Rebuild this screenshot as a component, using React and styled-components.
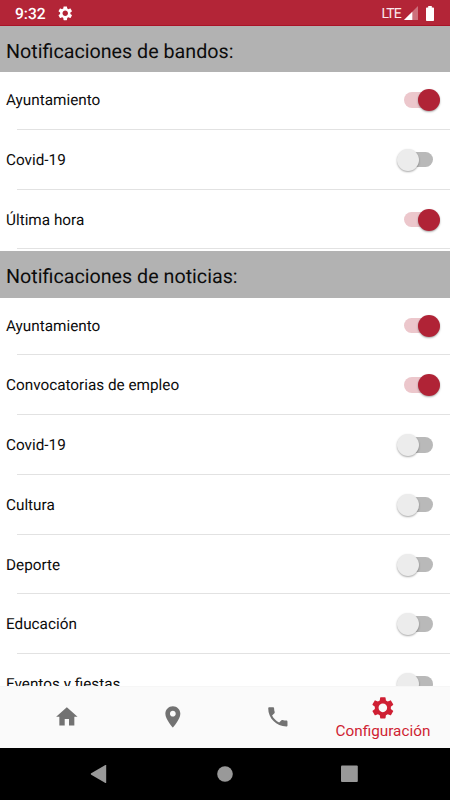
import React, { useState } from 'react'
import styled, { createGlobalStyle } from 'styled-components'

const bandos = [
    { label: 'Ayuntamiento', on: true },
    { label: 'Covid-19', on: false },
    { label: 'Última hora', on: true },
]

const noticias = [
    { label: 'Ayuntamiento', on: true },
    { label: 'Convocatorias de empleo', on: true },
    { label: 'Covid-19', on: false },
    { label: 'Cultura', on: false },
    { label: 'Deporte', on: false },
    { label: 'Educación', on: false },
    { label: 'Eventos y fiestas', on: false },
]

const gearPath = 'M19.43 12.98c.04-.32.07-.64.07-.98s-.03-.66-.07-.98l2.11-1.65c.19-.15.24-.42.12-.64l-2-3.46c-.12-.22-.39-.3-.61-.22l-2.49 1c-.52-.4-1.08-.73-1.69-.98l-.38-2.65C14.46 2.18 14.25 2 14 2h-4c-.25 0-.46.18-.49.42l-.38 2.65c-.61.25-1.17.59-1.69.98l-2.49-1c-.23-.09-.49 0-.61.22l-2 3.46c-.13.22-.07.49.12.64l2.11 1.65c-.04.32-.07.65-.07.98s.03.66.07.98l-2.11 1.65c-.19.15-.24.42-.12.64l2 3.46c.12.22.39.3.61.22l2.49-1c.52.4 1.08.73 1.69.98l.38 2.65c.03.24.24.42.49.42h4c.25 0 .46-.18.49-.42l.38-2.65c.61-.25 1.17-.59 1.69-.98l2.49 1c.23.09.49 0 .61-.22l2-3.46c.12-.22.07-.49-.12-.64l-2.11-1.65zM12 16c-2.21 0-4-1.79-4-4s1.79-4 4-4 4 1.79 4 4-1.79 4-4 4z'

const tabs = [
    { id: 'home', path: 'M10 20v-6h4v6h5v-8h3L12 3 2 12h3v8z' },
    { id: 'place', path: 'M12 2C8.13 2 5 5.13 5 9c0 5.25 7 13 7 13s7-7.75 7-13c0-3.87-3.13-7-7-7zm0 9.7c-1.5 0-2.7-1.2-2.7-2.7s1.2-2.7 2.7-2.7 2.7 1.2 2.7 2.7-1.2 2.7-2.7 2.7z' },
    { id: 'phone', path: 'M6.62 10.79c1.44 2.83 3.76 5.14 6.59 6.59l2.2-2.2c.27-.27.67-.36 1.02-.24 1.12.37 2.33.57 3.57.57.55 0 1 .45 1 1V20c0 .55-.45 1-1 1-9.39 0-17-7.61-17-17 0-.55.45-1 1-1h3.5c.55 0 1 .45 1 1 0 1.25.2 2.45.57 3.57.11.35.03.74-.25 1.02l-2.2 2.2z' },
    { id: 'settings', path: gearPath, label: 'Configuración' },
]

const Section = ({ title, items }) => {
    const [values, setValues] = useState(items.map((item) => item.on))

    const toggle = (index) => {
        setValues(values.map((value, i) => (i === index ? !value : value)))
    }

    return (
        <section>
            <SectionTitle>{title}</SectionTitle>
            {items.map((item, index) => (
                <Row key={item.label}>
                    <Label>{item.label}</Label>
                    <Switch
                        role="switch"
                        aria-checked={values[index]}
                        aria-label={item.label}
                        $on={values[index]}
                        onClick={() => toggle(index)}
                    />
                </Row>
            ))}
        </section>
    )
}

const App = () => {
    const [active, setActive] = useState('settings')

    return (
        <Screen>
            <GlobalStyle />
            <StatusBar>
                <Clock>9:32</Clock>
                <StatusGear viewBox="0 0 24 24">
                    <path d={gearPath} />
                </StatusGear>
                <Network>LTE</Network>
                <Signal viewBox="0 0 14 14">
                    <path d="M14 0v14H0z" opacity=".35" />
                    <path d="M8.3 5.7V14H0z" />
                </Signal>
                <Battery viewBox="0 0 8 15">
                    <path d="M2.2 0h3.6v1.5h1.4c.5 0 .8.3.8.8v11.9c0 .5-.3.8-.8.8H.8c-.5 0-.8-.3-.8-.8V2.3c0-.5.3-.8.8-.8h1.4z" />
                </Battery>
            </StatusBar>
            <Content>
                <Section title="Notificaciones de bandos:" items={bandos} />
                <Section title="Notificaciones de noticias:" items={noticias} />
            </Content>
            <TabBar>
                {tabs.map((tab) => (
                    <Tab key={tab.id} $active={active === tab.id} onClick={() => setActive(tab.id)}>
                        <TabIcon viewBox="0 0 24 24">
                            <path d={tab.path} />
                        </TabIcon>
                        {active === tab.id && tab.label && <TabLabel>{tab.label}</TabLabel>}
                    </Tab>
                ))}
            </TabBar>
            <NavBar>
                <NavIcon viewBox="0 0 20 20">
                    <path d="M1.2 9.3 15.4 1.1c.4-.2.8 0 .8.5v16.8c0 .5-.4.7-.8.5L1.2 10.7c-.6-.4-.6-1 0-1.4z" />
                </NavIcon>
                <NavIcon viewBox="0 0 20 20">
                    <circle cx="10" cy="10" r="7.8" />
                </NavIcon>
                <NavIcon viewBox="0 0 20 20">
                    <rect x="1" y="1.5" width="16.8" height="16.6" rx="1" />
                </NavIcon>
            </NavBar>
        </Screen>
    )
}

export default App

const GlobalStyle = createGlobalStyle`
* {
    box-sizing: border-box;
}
body {
    margin: 0;
    font-family: Roboto, 'Liberation Sans', sans-serif;
    text-rendering: geometricPrecision;
}
button {
    border: 0;
    padding: 0;
    background: none;
    font: inherit;
    cursor: pointer;
}
`
const Screen = styled.div`
width: 450px;
height: 800px;
display: flex;
flex-direction: column;
overflow: hidden;
background-color: #fff;
color: #0c0c0c;
`
const StatusBar = styled.header`
flex: none;
height: 26px;
display: flex;
align-items: center;
padding: 1px 16px 0 15px;
background-color: #b32537;
border-bottom: 1px solid #a91327;
color: #fff;
`
const Clock = styled.span`
font-size: 15.6px;
font-weight: 500;
line-height: 20px;
margin-top: 2px;
`
const StatusGear = styled.svg`
width: 16.5px;
height: 16.5px;
margin-left: 11.5px;
fill: #fff;
`
const Network = styled.span`
margin-left: auto;
margin-top: 1px;
font-size: 14px;
letter-spacing: -0.8px;
color: #fbe9ec;
`
const Signal = styled.svg`
width: 14px;
height: 14px;
margin-left: 3px;
fill: #fff;
`
const Battery = styled.svg`
width: 8px;
height: 15px;
margin-left: 8px;
fill: #fff;
`
const Content = styled.main`
flex: 1;
min-height: 0;
overflow: hidden;
`
const SectionTitle = styled.h2`
height: 46.2px;
margin: 0;
padding: 4px 6px 0;
display: flex;
align-items: center;
background-color: #b2b2b2;
font-size: 19.7px;
font-weight: 400;
`
const Row = styled.div`
height: 57.75px;
margin-bottom: 2px;
padding: 0 10px 2px 6px;
display: flex;
align-items: center;
justify-content: space-between;
background: linear-gradient(#e2e2e2, #e2e2e2) 17px 100% / 100% 1px no-repeat;
`
const Label = styled.span`
font-size: 15.3px;
`
const Switch = styled.button`
width: 43.5px;
height: 22px;
display: flex;
align-items: center;
justify-content: ${({ $on }) => ($on ? 'flex-end' : 'flex-start')};
position: relative;
&:before{
    content: '';
    position: absolute;
    left: 7.5px;
    right: 7.5px;
    top: 3px;
    height: 15.5px;
    border-radius: 8px;
    background-color: ${({ $on }) => ($on ? '#ecc7cc' : '#b9b9b9')};
}
&:after{
    content: '';
    position: relative;
    width: 22px;
    height: 22px;
    border-radius: 50%;
    background-color: ${({ $on }) => ($on ? '#b02336' : '#ececec')};
    box-shadow: 0 1px 2px rgba(0, 0, 0, 0.35);
}
`
const TabBar = styled.nav`
flex: none;
height: 62px;
display: flex;
padding: 0 14.4px;
background-color: #fafafa;
border-top: 1px solid #f6f6f6;
`
const Tab = styled.button`
flex: 1;
min-width: 0;
display: flex;
flex-direction: column;
align-items: center;
justify-content: center;
padding-top: ${({ $active }) => ($active ? '1.5px' : '0')};
color: ${({ $active }) => ($active ? '#cf1f33' : '#727272')};
`
const TabIcon = styled.svg`
width: 25.7px;
height: 25.7px;
fill: currentColor;
`
const TabLabel = styled.span`
font-size: 15.3px;
line-height: 18px;
margin-top: 1px;
`
const NavBar = styled.footer`
flex: none;
height: 52.5px;
display: flex;
align-items: center;
justify-content: center;
gap: 105px;
background-color: #000;
`
const NavIcon = styled.svg`
width: 20px;
height: 20px;
fill: #999;
`
